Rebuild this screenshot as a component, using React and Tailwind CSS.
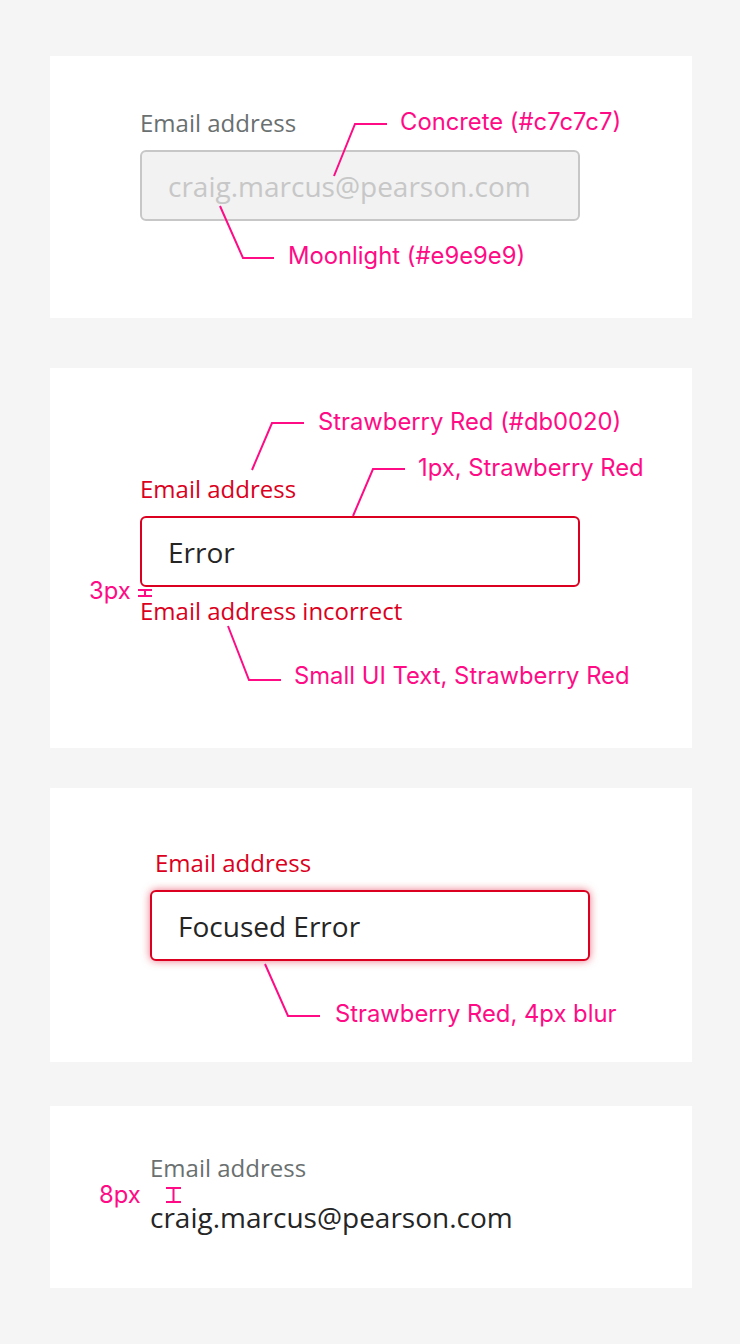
import React from "react";

const PINK = "#ff0b86";
const OPEN = { fontFamily: '"Open Sans", "Noto Sans", sans-serif' };
const ANN = { fontFamily: 'Inter, Roboto, "Liberation Sans", sans-serif' };

function Note({ x, y, children }) {
  return (
    <div
      className="absolute text-[23.8px] leading-[24px] whitespace-nowrap text-[#ff0b86]"
      style={{ ...ANN, left: x, top: y }}
    >
      {children}
    </div>
  );
}

function Lines({ children }) {
  return (
    <svg
      className="absolute inset-0 w-full h-full pointer-events-none"
      fill="none"
      stroke={PINK}
      strokeWidth="2"
    >
      {children}
    </svg>
  );
}

export default function App() {
  return (
    <div className="min-h-[1344px] w-[740px] bg-[#f5f5f5] pt-[56px] pl-[50px] pr-[48px]" style={OPEN}>
      {/* Card 1 - disabled */}
      <div className="relative h-[262px] bg-white pt-[51px] pl-[90px]">
        <div className="text-[24px] leading-[32px] text-[#6a7070] mb-[11px]">Email address</div>
        <div className="w-[440px] h-[71px] rounded-[6px] border-2 border-[#c7c7c7] bg-[#f2f2f2] flex items-center pl-[26px]">
          <span className="text-[28px] leading-[38px] text-[#c7c7c7]">craig.marcus@pearson.com</span>
        </div>
        <Lines>
          <polyline points="284,120 305,68 337,68" />
          <polyline points="170,150 193,202 224,202" />
        </Lines>
        <Note x={350} y={54}>Concrete (#c7c7c7)</Note>
        <Note x={238} y={188}>Moonlight (#e9e9e9)</Note>
      </div>

      {/* Card 2 - error */}
      <div className="relative h-[380px] bg-white mt-[50px] pt-[105px] pl-[90px]">
        <div className="text-[24px] leading-[32px] text-[#db0020] mb-[11px]">Email address</div>
        <div className="w-[440px] h-[71px] rounded-[6px] border-2 border-[#db0020] bg-white flex items-center pl-[26px]">
          <span className="text-[28px] leading-[38px] text-[#252525]">Error</span>
        </div>
        <div className="text-[24px] leading-[32px] text-[#db0020] mt-[8px]">Email address incorrect</div>
        <Lines>
          <polyline points="202,102 222,55 254,55" />
          <polyline points="303,148 323,101 355,101" />
          <polyline points="178,258 199,312 231,312" />
          <line x1="88" y1="222" x2="102" y2="222" />
          <line x1="88" y1="228" x2="102" y2="228" />
          <line x1="95" y1="222" x2="95" y2="228" />
        </Lines>
        <Note x={268} y={42}>Strawberry Red (#db0020)</Note>
        <Note x={368} y={88}>1px, Strawberry Red</Note>
        <Note x={39} y={211}>3px</Note>
        <Note x={244} y={296}>Small UI Text, Strawberry Red</Note>
      </div>

      {/* Card 3 - focused error */}
      <div className="relative h-[274px] bg-white mt-[40px] pt-[59px] pl-[100px]">
        <div className="text-[24px] leading-[32px] text-[#db0020] mb-[11px] ml-[5px]">Email address</div>
        <div className="w-[440px] h-[71px] rounded-[6px] border-2 border-[#db0020] bg-white flex items-center pl-[26px] shadow-[0_0_8px_rgba(219,0,32,0.55)]">
          <span className="text-[28px] leading-[38px] text-[#252525]">Focused Error</span>
        </div>
        <Lines>
          <polyline points="215,176 238,228 270,228" />
        </Lines>
        <Note x={285} y={214}>Strawberry Red, 4px blur</Note>
      </div>

      {/* Card 4 - read only */}
      <div className="relative h-[182px] bg-white mt-[44px] pt-[46px] pl-[100px]">
        <div className="text-[24px] leading-[32px] text-[#6a7070]">Email address</div>
        <div className="text-[28px] leading-[36px] text-[#252525] mt-[15px]">craig.marcus@pearson.com</div>
        <Lines>
          <line x1="116" y1="82" x2="131" y2="82" />
          <line x1="116" y1="96" x2="131" y2="96" />
          <line x1="123.5" y1="82" x2="123.5" y2="96" />
        </Lines>
        <Note x={49} y={77}>8px</Note>
      </div>
    </div>
  );
}
